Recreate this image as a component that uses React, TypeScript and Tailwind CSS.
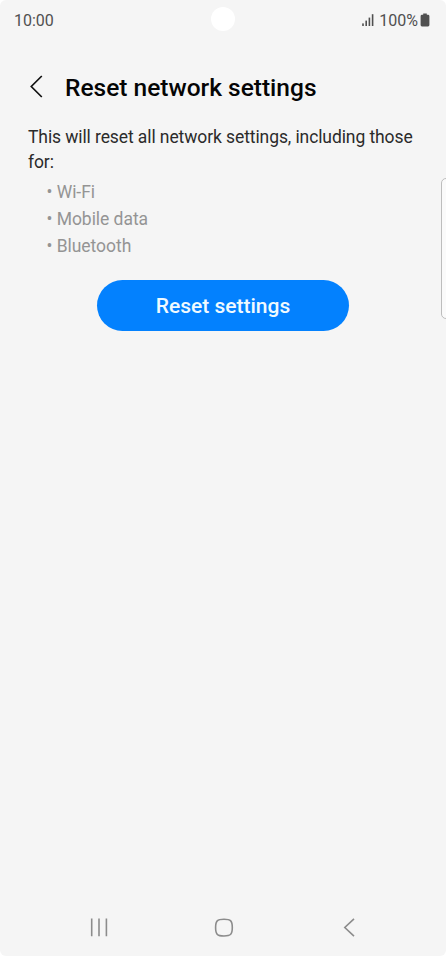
const items = ["Wi-Fi", "Mobile data", "Bluetooth"];

function StatusBar() {
  return (
    <div className="relative flex h-10 items-center justify-between pr-4 pl-3.5 text-[#505050]">
      <span className="pt-px text-[16px] leading-5">10:00</span>
      <span className="absolute top-[7px] left-[211px] size-6 rounded-full bg-white" />
      <div className="flex items-center">
        <svg width="13" height="14" viewBox="0 0 13 14" fill="currentColor" className="mr-1">
          <rect x="0.2" y="10.4" width="1.6" height="2.6" />
          <rect x="3.4" y="7.6" width="1.6" height="5.4" />
          <rect x="6.6" y="4.6" width="1.6" height="8.4" />
          <rect x="9.8" y="1.2" width="1.6" height="11.8" />
        </svg>
        <span className="pt-px text-[16px] leading-5">100%</span>
        <svg width="10" height="14" viewBox="0 0 10 14" fill="currentColor" className="ml-[2px]">
          <path d="M3.2 0.4h3.6v1.4h1.2a1.4 1.4 0 0 1 1.4 1.4v8.8a1.4 1.4 0 0 1-1.4 1.4H2a1.4 1.4 0 0 1-1.4-1.4V3.2A1.4 1.4 0 0 1 2 1.8h1.2z" />
        </svg>
      </div>
    </div>
  );
}

function NavigationBar() {
  return (
    <nav className="mt-auto flex h-14 items-center justify-between pr-[87px] pb-px pl-[89px] text-[#8c8c8c]">
      <button type="button" aria-label="Recents">
        <svg width="20" height="20" viewBox="0 0 20 20" fill="none" stroke="currentColor" strokeWidth="1.6">
          <path d="M2.7 0.6v17.6M10 0.6v17.6M17.4 0.6v17.6" />
        </svg>
      </button>
      <button type="button" aria-label="Home">
        <svg width="20" height="20" viewBox="0 0 20 20" fill="none" stroke="currentColor" strokeWidth="1.6">
          <path d="M10 1.2C16.8 1.2 18.3 2.9 18.3 9.6S16.8 18 10 18 1.6 16.3 1.6 9.6 3.2 1.2 10 1.2z" />
        </svg>
      </button>
      <button type="button" aria-label="Back">
        <svg width="20" height="20" viewBox="0 0 20 20" fill="none" stroke="currentColor" strokeWidth="1.6">
          <path d="M15 0.8 5.8 9.5l9.2 8.7" />
        </svg>
      </button>
    </nav>
  );
}

export default function App() {
  return (
    <div className="h-screen w-full overflow-hidden bg-white font-[Roboto,sans-serif]">
      <div className="relative flex h-full flex-col overflow-hidden rounded-[6px] bg-[#f5f5f5]">
        <StatusBar />

        <header className="mt-7 flex h-10 items-center pl-[29px]">
          <button type="button" aria-label="Navigate up" className="pb-0.5">
            <svg width="16" height="24" viewBox="0 0 16 24" fill="none" stroke="#111" strokeWidth="1.7">
              <path d="M12.8 1 2.3 11.5l10.5 10.5" />
            </svg>
          </button>
          <h1 className="ml-5 text-[24.5px] leading-8 font-medium whitespace-nowrap text-[#050505]">Reset network settings</h1>
        </header>

        <main className="px-7 pt-[17px]">
          <p className="text-[17.5px] leading-[25px] tracking-[-0.095px] text-[#2b2b2b]">
            This will reset all network settings, including those
            <br />
            for:
          </p>
          <ul className="mt-1 pl-[18.5px] text-[17.5px] leading-[27.2px] tracking-[-0.04px] text-[#949494]">
            {items.map((item) => (
              <li key={item}>• {item}</li>
            ))}
          </ul>
          <button
            type="button"
            className="mt-[19.4px] ml-[69.4px] block h-[51px] w-[251.2px] rounded-full bg-[#0381fe] pt-[3px] text-[21px] font-medium text-[#f0faff]"
          >
            Reset settings
          </button>
        </main>

        <NavigationBar />
        <div className="absolute top-[178px] left-[441px] h-[141px] w-3 rounded-[5px] border border-[#bdbdbd] bg-[#fafafa]" />
      </div>
    </div>
  );
}
